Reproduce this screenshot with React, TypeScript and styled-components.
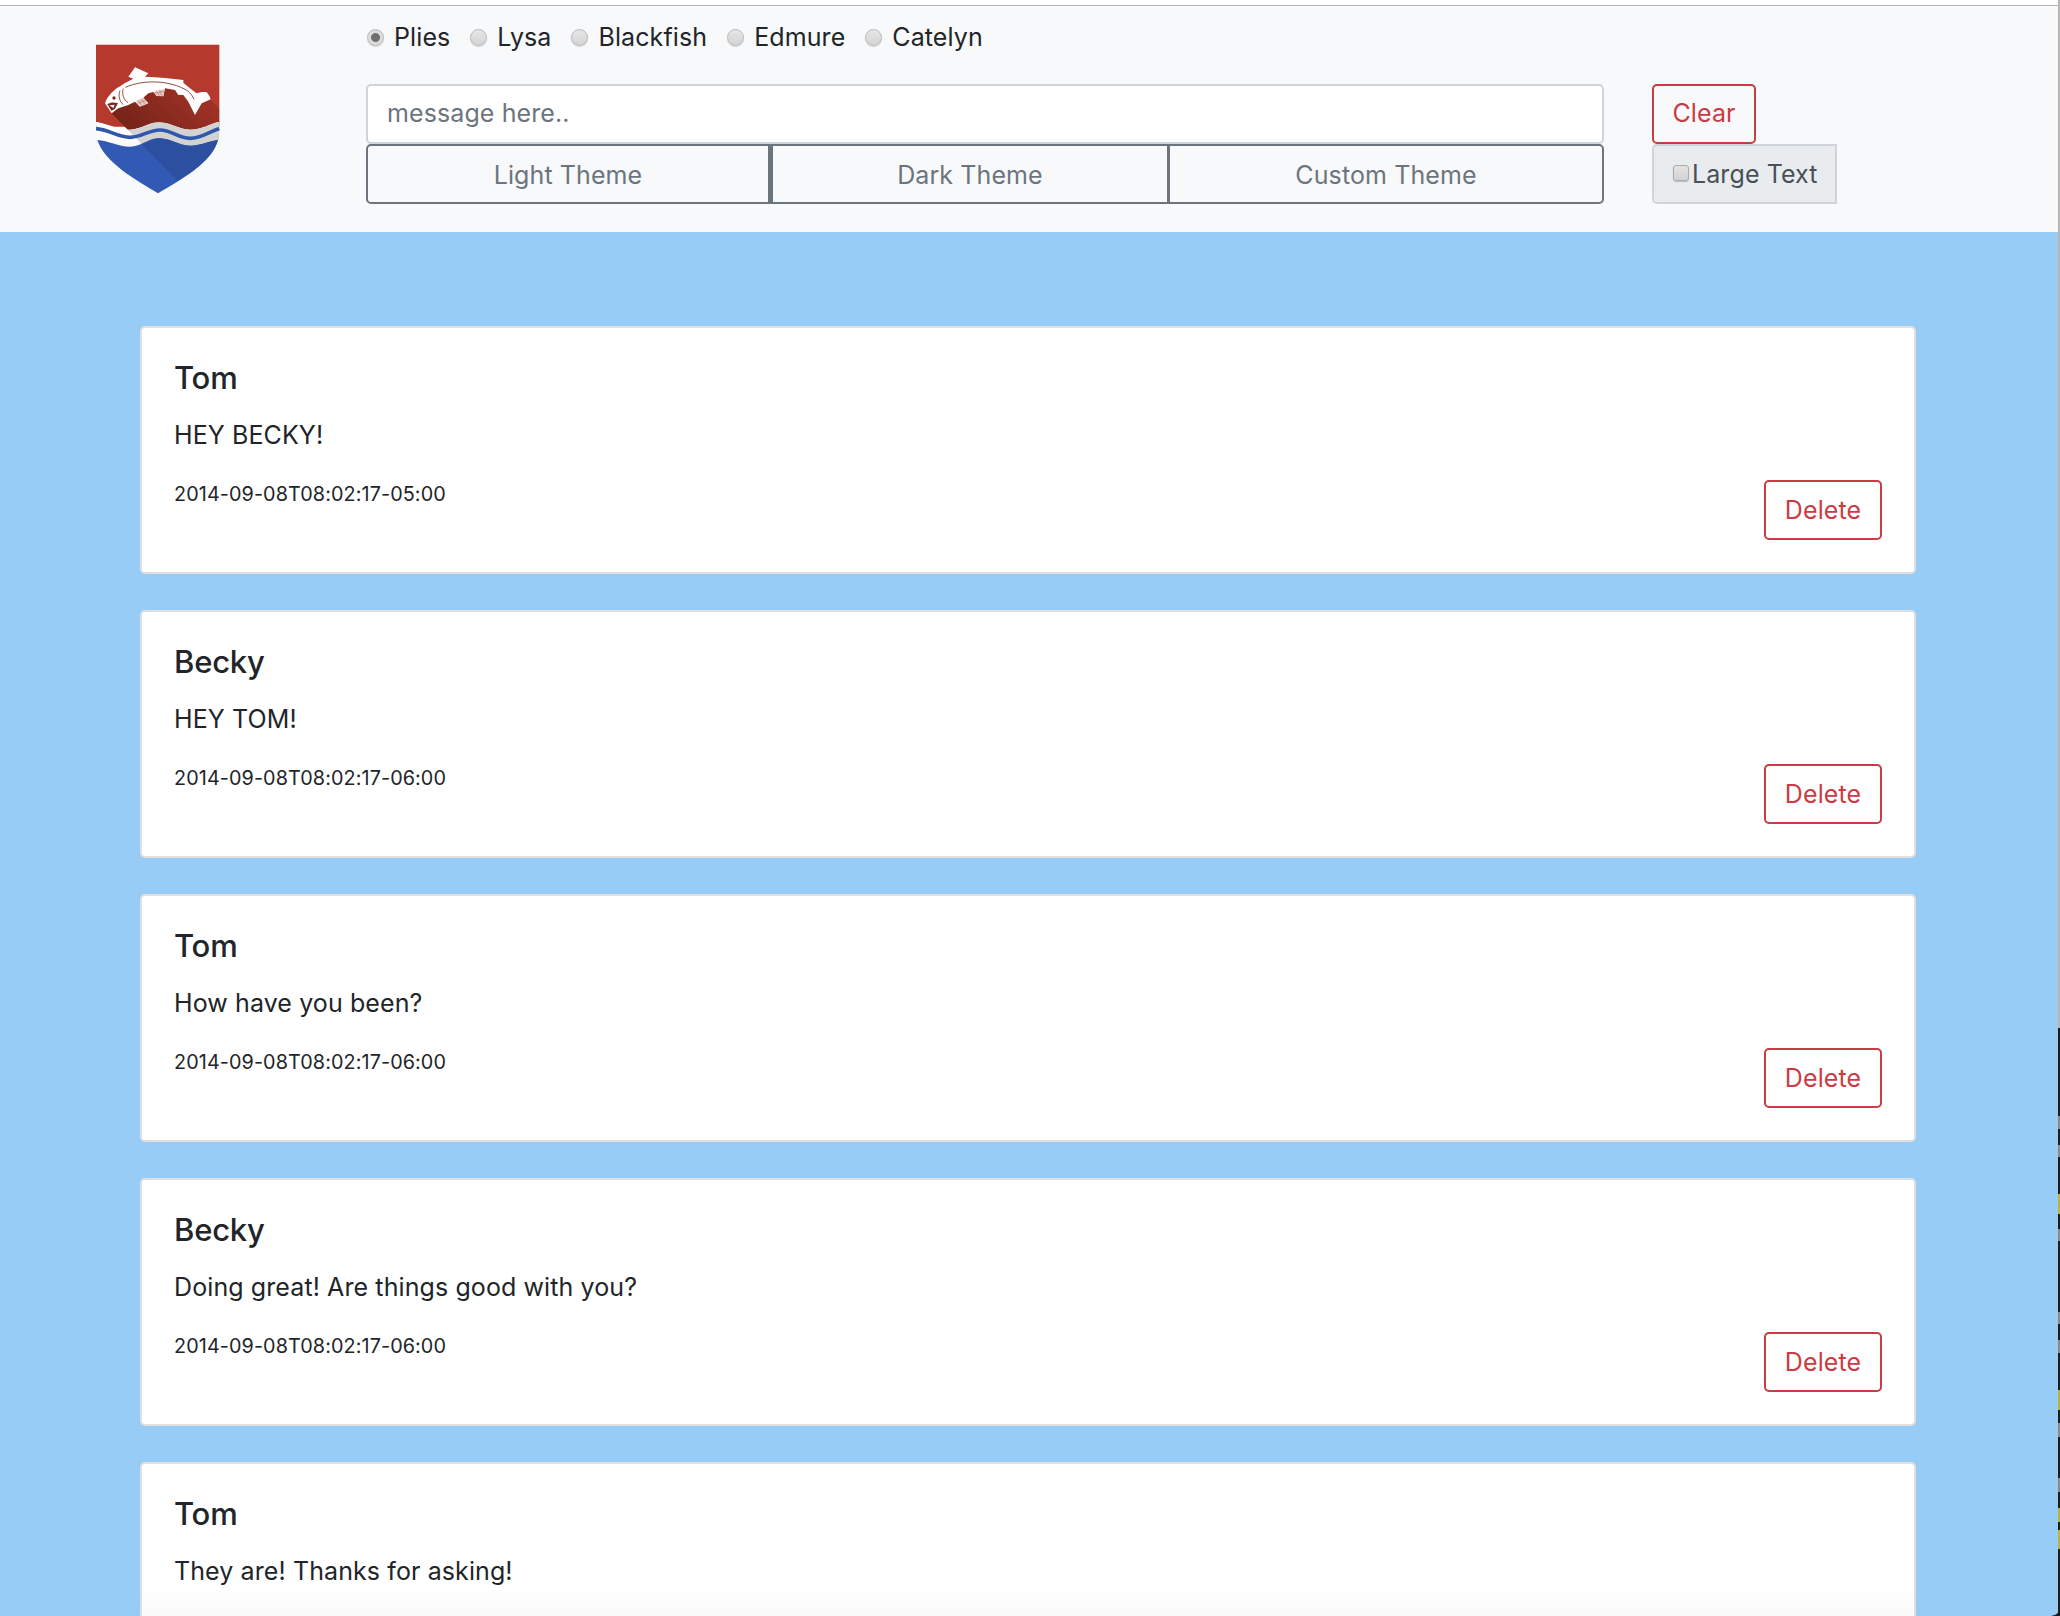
import React from "react";
import styled, { createGlobalStyle } from "styled-components";

const FONT = `Inter, "Liberation Sans", sans-serif`;
const DANGER = "#cb3b44";

const Global = createGlobalStyle`
  html, body { margin: 0; padding: 0; height: 1616px; overflow: hidden; background: #96ccf6; }
  * { box-sizing: border-box; }
  body { font-family: ${FONT}; color: #212529; font-size: 25px; letter-spacing: 0.1px; }
`;

const Page = styled.div`
  position: relative;
  width: 2060px;
  height: 1616px;
  overflow: hidden;
  background: #96ccf6;
`;
const TopStrip = styled.div`
  height: 6px;
  background: #fff;
  border-bottom: 1px solid #b4b6b9;
`;
const Header = styled.header`
  height: 226px;
  background: #f8f9fa;
  display: flex;
`;
const LogoCell = styled.div`
  width: 366px;
  padding: 24px 0 0 80px;
`;
const Controls = styled.div`
  width: 1238px;
  display: flex;
  flex-direction: column;
`;
const RadioRow = styled.div`
  height: 78px;
  padding: 16px 0 0 1px;
  display: flex;
  align-items: flex-start;
  gap: 20px;
`;
const RadioLabel = styled.label`
  display: flex;
  align-items: center;
  gap: 10px;
  height: 30px;
  font-size: 25px;
`;
const Radio = styled.input`
  appearance: none;
  margin: 0;
  width: 17px;
  height: 17px;
  border-radius: 50%;
  background: ${(p) =>
    p.checked
      ? "radial-gradient(circle, #6f6f6f 0 4px, #dcdcdc 5px)"
      : "linear-gradient(#e6e6e6, #d4d4d4)"};
  border: 1px solid #b9b9b9;
  box-shadow: 0 1px 1px rgba(0, 0, 0, 0.15);
`;
const MessageInput = styled.input`
  width: 100%;
  height: 60px;
  padding: 0 19px 2px;
  background: #fff;
  border: 2px solid #ced4da;
  border-radius: 5px;
  font: 400 25px ${FONT};
  letter-spacing: 0.1px;
  outline: none;
  &::placeholder { color: #6c757d; opacity: 1; }
`;
const ThemeGroup = styled.div`
  display: flex;
  height: 60px;
`;
const ThemeButton = styled.button<{ $w: number; $left: number; $first?: boolean; $last?: boolean }>`
  width: ${(p) => p.$w}px;
  flex: none;
  background: #f8f9fa;
  color: #6c757d;
  border: 2px solid #6c757d;
  border-left-width: ${(p) => p.$left}px;
  border-radius: ${(p) => (p.$first ? "5px 0 0 5px" : p.$last ? "0 5px 5px 0" : "0")};
  font: 400 25px ${FONT};
  letter-spacing: 0.1px;
  padding: 2px 0 0;
`;
const SideCol = styled.div`
  margin-left: 48px;
  padding-top: 78px;
  display: flex;
  flex-direction: column;
  align-items: flex-start;
`;
const OutlineDanger = styled.button<{ $w: number; $pad: number }>`
  width: ${(p) => p.$w}px;
  height: 60px;
  padding: 0 0 ${(p) => p.$pad}px;
  background: transparent;
  color: ${DANGER};
  border: 2px solid ${DANGER};
  border-radius: 5px;
  font: 400 25px ${FONT};
  letter-spacing: 0.1px;
`;
const LargeText = styled.label`
  width: 185px;
  height: 60px;
  display: flex;
  align-items: center;
  padding-left: 19px;
  background: #e9ecef;
  border: 2px solid #ced4da;
  border-radius: 5px 0 0 5px;
  font-size: 25px;
  color: #495057;
`;
const Check = styled.input`
  appearance: none;
  margin: 0 3px 3px 0;
  width: 16px;
  height: 16px;
  border-radius: 3px;
  background: linear-gradient(#e4e4e4, #d2d2d2);
  border: 1px solid #aaa;
  box-shadow: 0 1px 1px rgba(0, 0, 0, 0.2);
`;
const Feed = styled.main`
  padding: 94px 144px 0 140px;
  display: flex;
  flex-direction: column;
  gap: 36px;
`;
const Card = styled.article`
  flex: none;
  height: 248px;
  padding: 31px 32px 0 32px;
  background: #fff;
  border: 2px solid #dfdfdf;
  border-radius: 5px;
  display: flex;
  flex-direction: column;
`;
const Name = styled.h5`
  margin: 0;
  font-size: 31px;
  line-height: 38px;
  font-weight: 500;
  letter-spacing: -0.2px;
`;
const Body = styled.p`
  margin: 20px 0 0;
  font-size: 25px;
  line-height: 36px;
`;
const Stamp = styled.div`
  margin-top: 27px;
  font-size: 19.8px;
  line-height: 28px;
`;
const CardFoot = styled.div`
  display: flex;
  justify-content: flex-end;
  margin-top: -28px;
`;
const BottomFade = styled.div`
  position: absolute;
  left: 142px;
  right: 146px;
  bottom: 0;
  height: 30px;
  background: linear-gradient(rgba(0, 0, 0, 0), rgba(0, 0, 0, 0.02));
`;
const EdgeGray = styled.div`
  position: absolute;
  right: 0;
  top: 0;
  height: 1028px;
  width: 2px;
  background: #b5b5b5;
`;
const EdgeStrip = styled.div`
  position: absolute;
  right: 0;
  top: 1028px;
  bottom: 0;
  width: 2px;
  background: #1c1c1c;
`;
const EdgeMark = styled.i<{ $tone: string }>`
  position: absolute;
  right: 0;
  width: 2px;
  background: ${(p) => p.$tone};
`;
const EdgeCorner = styled.div`
  position: absolute;
  right: 0;
  bottom: 0;
  width: 8px;
  height: 8px;
  background: radial-gradient(circle at 0 0, transparent 7px, #1c1c1c 8px);
`;

const marks: [number, number, string][] = [
  [1116, 13, "#8a8a8a"],
  [1145, 12, "#8a8a8a"],
  [1194, 20, "#b8b24a"],
  [1229, 12, "#8a8a8a"],
  [1312, 12, "#8a8a8a"],
  [1340, 13, "#8a8a8a"],
  [1390, 20, "#b8b24a"],
  [1423, 14, "#8a8a8a"],
  [1478, 14, "#8a8a8a"],
  [1508, 14, "#b8b24a"],
  [1530, 19, "#b8b24a"],
];

const Shield = () => {
  const waveTop = "M48 275C85 280 115 300 150 299C185 298 205 276 240 277C275 278 295 299 330 299C365 299 390 280 418 275";
  const lineA = "M48 296C85 298 115 322 150 322C185 322 205 300 240 300C275 300 295 325 330 325C365 325 390 303 418 296";
  const blue = "M52 330C85 332 115 350 150 350C185 350 205 324 240 325C275 326 295 347 330 347C365 347 390 332 414 330C395 400 300 450 234 490C170 450 75 400 52 330Z";
  const shadow = "M95 250L293 452L420 370L420 240L385 200L200 140L100 200Z";
  return (
    <svg width="160" height="180" viewBox="0 0 480 540" aria-hidden="true">
      <defs>
        <clipPath id="redC"><path d="M48 44H418V275C390 280 365 299 330 299C295 299 275 278 240 277C205 276 185 298 150 299C115 300 85 280 48 275Z" /></clipPath>
        <clipPath id="whiteC"><path d={`${waveTop}V330C390 332 365 347 330 347C295 347 275 326 240 325C205 324 185 350 150 350C115 350 85 332 52 330L48 310Z`} /></clipPath>
        <clipPath id="blueC"><path d={blue} /></clipPath>
        <linearGradient id="redS" x1="0" y1="1" x2="1" y2="0">
          <stop offset="0.2" stopColor="#6c2016" />
          <stop offset="0.85" stopColor="#a03226" />
        </linearGradient>
      </defs>
      <path d="M48 44H418V290H48Z" fill="#b53a2d" />
      <path d={shadow} fill="url(#redS)" clipPath="url(#redC)" />
      <path d={`${waveTop}V335H50Z`} fill="#fff" clipPath="url(#whiteC)" />
      <path d={shadow} fill="#d2d2d2" clipPath="url(#whiteC)" />
      <path d={lineA} fill="none" stroke="#2f58ad" strokeWidth="11" />
      <path d={blue} fill="#3259b3" />
      <path d={shadow} fill="#2c4f9f" clipPath="url(#blueC)" />
      {/* fish body, fins and tail */}
      <path
        d="M75 220C82 200 96 186 110 175C125 165 142 154 160 146L145 140L165 112L205 130L195 140C235 141 275 145 310 150L310 158C322 168 338 182 350 190C362 186 372 185 380 187C386 194 390 201 392 208L365 220L345 255L325 215L310 195L295 195L285 180L255 175L250 199L230 198L220 186L205 190L190 203L205 220L180 230L165 215L145 225L115 235L95 250L85 235Z"
        fill="#fff"
      />
      {/* lateral line and gills */}
      <path d="M136 172C190 148 270 150 322 182C332 190 338 198 342 208" fill="none" stroke="#7a2a20" strokeWidth="2.5" />
      <path d="M130 176C124 192 132 210 144 218M120 182C114 196 118 214 130 224" fill="none" stroke="#7a2a20" strokeWidth="2.5" />
      {/* head detail: eye, jaw */}
      <circle cx="102" cy="204" r="5" fill="#7a2a20" />
      <path d="M82 222C92 216 104 216 114 220L104 238L94 242Z" fill="#7a2a20" />
      <path d="M88 226L104 224L100 234Z" fill="#fff" />
      {/* hatched fins */}
      <path d="M222 185L254 176L250 198L231 197Z" fill="#e6c5c0" />
      <path d="M228 180L238 198M238 178L246 197M222 190L252 184" stroke="#a9574d" strokeWidth="1.2" fill="none" />
      <path d="M167 214L190 203L204 219L181 229Z" fill="#e6c5c0" />
      <path d="M174 210L186 227M183 206L196 223M172 221L198 210" stroke="#a9574d" strokeWidth="1.2" fill="none" />
    </svg>
  );
};

const names = ["Plies", "Lysa", "Blackfish", "Edmure", "Catelyn"];
const msgs: { name: string; text: string; stamp?: string }[] = [
  { name: "Tom", text: "HEY BECKY!", stamp: "2014-09-08T08:02:17-05:00" },
  { name: "Becky", text: "HEY TOM!", stamp: "2014-09-08T08:02:17-06:00" },
  { name: "Tom", text: "How have you been?", stamp: "2014-09-08T08:02:17-06:00" },
  { name: "Becky", text: "Doing great! Are things good with you?", stamp: "2014-09-08T08:02:17-06:00" },
  { name: "Tom", text: "They are! Thanks for asking!" },
];

export default function App() {
  return (
    <Page>
      <Global />
      <TopStrip />
      <Header>
        <LogoCell><Shield /></LogoCell>
        <Controls>
          <RadioRow>
            {names.map((n, i) => (
              <RadioLabel key={n}>
                <Radio type="radio" name="who" checked={i === 0} readOnly />
                {n}
              </RadioLabel>
            ))}
          </RadioRow>
          <MessageInput placeholder="message here.." />
          <ThemeGroup>
            <ThemeButton $w={404} $left={2} $first>Light Theme</ThemeButton>
            <ThemeButton $w={399} $left={3}>Dark Theme</ThemeButton>
            <ThemeButton $w={435} $left={1} $last>Custom Theme</ThemeButton>
          </ThemeGroup>
        </Controls>
        <SideCol>
          <OutlineDanger $w={104} $pad={2}>Clear</OutlineDanger>
          <LargeText><Check type="checkbox" />Large Text</LargeText>
        </SideCol>
      </Header>
      <Feed>
        {msgs.map((m, i) => (
          <Card key={i}>
            <Name>{m.name}</Name>
            <Body>{m.text}</Body>
            {m.stamp && <Stamp>{m.stamp}</Stamp>}
            {m.stamp && <CardFoot><OutlineDanger $w={118} $pad={0}>Delete</OutlineDanger></CardFoot>}
          </Card>
        ))}
      </Feed>
      <BottomFade />
      <EdgeGray />
      <EdgeStrip />
      {marks.map(([top, h, tone]) => (
        <EdgeMark key={top} $tone={tone} style={{ top, height: h }} />
      ))}
      <EdgeCorner />
    </Page>
  );
}
